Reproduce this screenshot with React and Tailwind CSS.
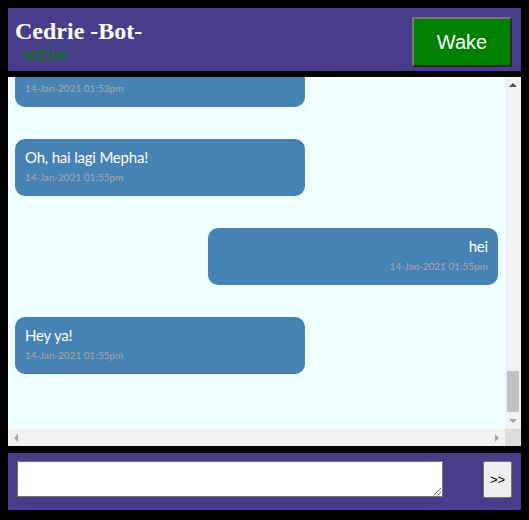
import React, { useLayoutEffect, useRef } from "react";

const earlier = [
  ["left", "Halo Cedrie!", "14-Jan-2021 01:40pm"],
  ["right", "hai", "14-Jan-2021 01:40pm"],
  ["left", "Apa kabar?", "14-Jan-2021 01:41pm"],
  ["right", "baik", "14-Jan-2021 01:41pm"],
  ["left", "Syukurlah!", "14-Jan-2021 01:42pm"],
  ["right", "kamu?", "14-Jan-2021 01:42pm"],
  ["left", "Aku baik juga.", "14-Jan-2021 01:43pm"],
  ["right", "oke", "14-Jan-2021 01:43pm"],
  ["left", "Ada yang bisa dibantu?", "14-Jan-2021 01:44pm"],
  ["right", "tidak", "14-Jan-2021 01:44pm"],
  ["left", "Baiklah.", "14-Jan-2021 01:45pm"],
  ["right", "bye", "14-Jan-2021 01:45pm"],
  ["left", "Sampai jumpa!", "14-Jan-2021 01:46pm"],
  ["right", "hai lagi", "14-Jan-2021 01:48pm"],
  ["left", "Hai!", "14-Jan-2021 01:48pm"],
  ["right", "lagi apa?", "14-Jan-2021 01:49pm"],
  ["left", "Ngobrol sama kamu.", "14-Jan-2021 01:49pm"],
  ["right", "haha", "14-Jan-2021 01:50pm"],
  ["left", "Hehe.", "14-Jan-2021 01:50pm"],
  ["right", "tidur dulu", "14-Jan-2021 01:51pm"],
  ["left", "Selamat tidur!", "14-Jan-2021 01:51pm"],
  ["right", "hai", "14-Jan-2021 01:52pm"],
  ["left", "Zzz...", "14-Jan-2021 01:52pm"],
  ["right", "wake", "14-Jan-2021 01:53pm"],
  ["left", "Aku bangun!", "14-Jan-2021 01:53pm"],
  ["left", "Oh, hai lagi Mepha!", "14-Jan-2021 01:55pm"],
  ["right", "hei", "14-Jan-2021 01:55pm"],
  ["left", "Hey ya!", "14-Jan-2021 01:55pm"],
];

function Bubble({ side, text, time }) {
  const right = side === "right";
  return (
    <div className={right ? "flex justify-end" : "flex justify-start"}>
      <div
        className={
          "w-[290px] rounded-[10px] bg-[#4682B4] px-[10px] pt-[8px] pb-[11px] " +
          (right ? "text-right" : "text-left")
        }
      >
        <div className="text-[15px] leading-[20px] tracking-[-0.2px] text-white font-['Lato',sans-serif]">{text}</div>
        <div className="mt-[3px] text-[10px] leading-[15px] text-[#a9a9a9] font-['Lato',sans-serif]">{time}</div>
      </div>
    </div>
  );
}

function Tri({ dir, color }) {
  const pts = {
    up: "0,4 4,0 8,4",
    down: "0,0 8,0 4,4",
    left: "4,0 4,8 0,4",
    right: "0,0 0,8 4,4",
  }[dir];
  const vb = dir === "up" || dir === "down" ? "0 0 8 4" : "0 0 4 8";
  const w = dir === "up" || dir === "down" ? 8 : 4;
  const h = dir === "up" || dir === "down" ? 4 : 8;
  return (
    <svg width={w} height={h} viewBox={vb}>
      <polygon points={pts} fill={color} />
    </svg>
  );
}

export default function App() {
  const ref = useRef(null);
  useLayoutEffect(() => {
    if (ref.current) ref.current.scrollTop = ref.current.scrollHeight;
  }, []);
  return (
    <div className="min-h-[520px] bg-black p-2">
      <div className="flex h-[63px] items-start justify-between bg-[#483D8B] pl-[7px] pr-[9px]">
        <div className="pt-[9px] font-['Liberation_Serif',serif]">
          <div className="text-[24px] font-bold leading-[28px] text-white">Cedrie -Bot-</div>
          <div className="ml-[8px] text-[18px] leading-[18px] text-[#008000]">online</div>
        </div>
        <button className="mt-[9px] h-[50px] w-[100px] border-2 border-t-[#767676] border-l-[#767676] border-b-[#2b2b2b] border-r-[#2b2b2b] bg-[#008000] text-[20px] text-white font-['Liberation_Sans',sans-serif]">
          Wake
        </button>
      </div>
      <div className="mt-[6px] flex h-[369px] flex-col bg-[#F0FFFF]">
        <div className="flex min-h-0 flex-1">
          <div ref={ref} className="min-w-0 flex-1 overflow-hidden px-[7px] pt-[16px] pb-[55px]">
            <div className="flex flex-col gap-[32px]">
              {earlier.map(([s, t, tm], i) => (
                <Bubble key={i} side={s} text={t} time={tm} />
              ))}
            </div>
          </div>
          <div className="flex w-[16px] flex-col bg-[#f1f1f1]">
            <div className="flex h-[16px] items-center justify-center">
              <Tri dir="up" color="#505050" />
            </div>
            <div className="flex flex-1 flex-col justify-end px-[2px] pb-[1px]">
              <div className="h-[41px] bg-[#c1c1c1]" />
            </div>
            <div className="flex h-[16px] items-center justify-center">
              <Tri dir="down" color="#a3a3a3" />
            </div>
          </div>
        </div>
        <div className="flex h-[17px] bg-[#f1f1f1]">
          <div className="flex flex-1 items-center justify-between px-[6px]">
            <Tri dir="left" color="#a3a3a3" />
            <Tri dir="right" color="#a3a3a3" />
          </div>
          <div className="w-[16px] bg-[#dcdcdc]" />
        </div>
      </div>
      <div className="mt-[7px] flex h-[57px] items-start justify-between bg-[#483D8B] pl-[9px] pr-[9px] pt-[8px]">
        <textarea className="h-[36px] w-[426px] border border-[#767676] bg-white" />
        <button className="h-[37px] w-[29px] rounded-[2px] border border-[#767676] bg-[#efefef] text-[13px] text-black font-['Liberation_Sans',sans-serif]">
          &gt;&gt;
        </button>
      </div>
    </div>
  );
}
